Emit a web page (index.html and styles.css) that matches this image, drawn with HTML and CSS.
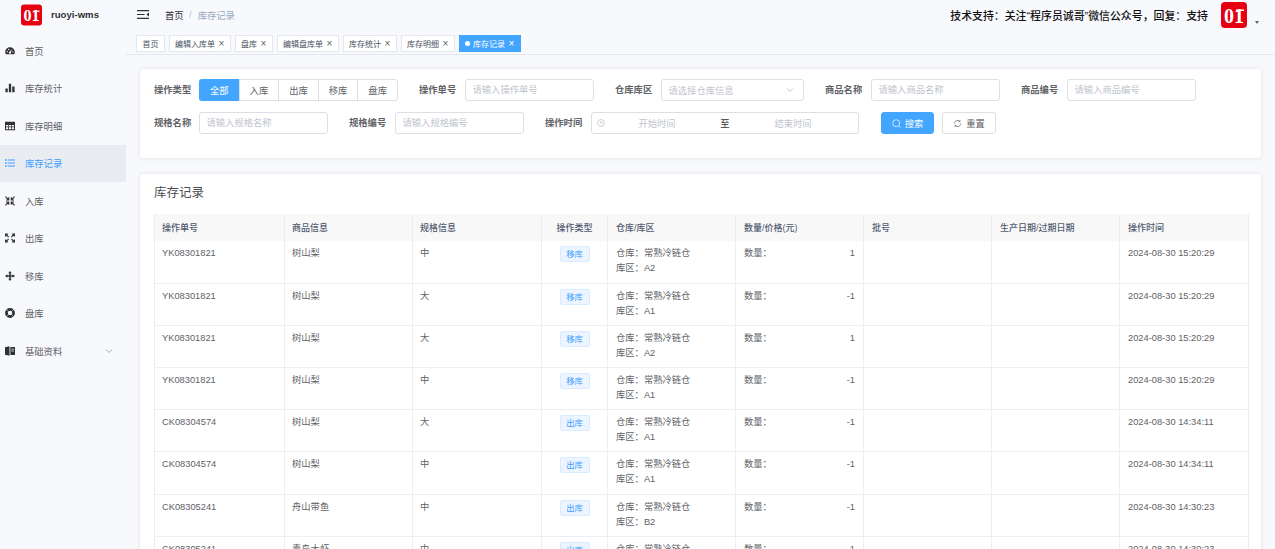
FILE: index.html
```html
<!DOCTYPE html>
<html lang="zh-CN">
<head>
<meta charset="utf-8">
<title>库存记录</title>
<link rel="stylesheet" href="styles.css">
</head>
<body>
<svg class="defs" width="0" height="0" aria-hidden="true">
  <symbol id="logo" viewBox="0 0 26 26">
    <rect width="26" height="26" rx="4" fill="#e60012"/>
    <text x="13" y="20.500" text-anchor="middle" font-family="Liberation Serif" font-weight="700" font-size="21" fill="#fff" textLength="20" lengthAdjust="spacingAndGlyphs">01</text>
    <rect x="15" y="7.500" width="8" height="1.500" fill="#fff"/>
  </symbol>
</svg>
<div class="app">
  <aside class="sidebar">
    <div class="brand">
      <svg class="brand-logo"><use href="#logo"/></svg>
      <span class="brand-name">ruoyi-wms</span>
    </div>
    <nav class="menu">
      <a class="menu-item"><svg class="mi" viewBox="0 0 12 12"><path d="M6 1.500a5.800 5.800 0 0 0-5.800 5.800c0 1.100.3 2 .8 2.700h10c.5-.7.8-1.600.8-2.700A5.800 5.800 0 0 0 6 1.500z" fill="#303133"/><circle cx="6" cy="8" r="1.300" fill="#fff"/><path d="M6 8l2-3.600" stroke="#fff" stroke-width="1"/><circle cx="2.800" cy="6.800" r=".8" fill="#fff"/><circle cx="4.500" cy="4.200" r=".8" fill="#fff"/><circle cx="9.400" cy="7" r=".8" fill="#fff"/></svg><span>首页</span></a>
      <a class="menu-item"><svg class="mi" viewBox="0 0 12 12"><path d="M.5 6.500h2.800V11H.5zM4.600 1h2.800v10H4.600zM8.700 4.200h2.800V11H8.700z" fill="#303133"/></svg><span>库存统计</span></a>
      <a class="menu-item"><svg class="mi" viewBox="0 0 12 12"><path fill-rule="evenodd" d="M0 1h12v10H0zM1.200 4.800v1.700h2.600V4.800zm3.500 0v1.700h2.600V4.800zm3.500 0v1.700h2.600V4.800zM1.200 7.400v2.400h2.600V7.400zm3.500 0v2.400h2.600V7.400zm3.500 0v2.400h2.600V7.400z" fill="#303133"/></svg><span>库存明细</span></a>
      <a class="menu-item active"><svg class="mi" viewBox="0 0 12 12"><path d="M0 1.500h2v1.800H0zM3.200 1.700H12v1.400H3.200zM0 5.100h2v1.800H0zM3.200 5.300H12v1.400H3.200zM0 8.700h2v1.800H0zM3.200 8.900H12v1.400H3.200z" fill="#409eff"/></svg><span>库存记录</span></a>
      <a class="menu-item"><svg class="mi" viewBox="0 0 12 12"><g stroke="#303133" stroke-width="1.300" fill="none"><path d="M.5 .8l4 4M4.500 1.500v3.300H1.200M11.500 .8l-4 4M7.500 1.500v3.300h3.300M.5 11.200l4-4M4.500 10.500V7.200H1.200M11.500 11.200l-4-4M7.500 10.500V7.200h3.300"/></g></svg><span>入库</span></a>
      <a class="menu-item"><svg class="mi" viewBox="0 0 12 12"><g stroke="#303133" stroke-width="1.400" fill="none"><path d="M.7 4.200V1.200h3M.9 1.400l3.400 3.400M11.300 4.200V1.200h-3M11.100 1.400L7.700 4.800M.7 7.800v3h3M.9 10.600l3.400-3.400M11.300 7.800v3h-3M11.100 10.600L7.700 7.200"/></g></svg><span>出库</span></a>
      <a class="menu-item"><svg class="mi" viewBox="0 0 12 12"><path d="M6 0l2.100 2.800H6.900v2.300h2.300V3.900L12 6 9.200 8.100V6.900H6.900v2.300h1.200L6 12 3.900 9.200h1.200V6.900H2.800v1.200L0 6l2.800-2.100v1.200h2.300V2.800H3.900z" fill="#303133"/></svg><span>移库</span></a>
      <a class="menu-item"><svg class="mi" viewBox="0 0 12 12"><circle cx="6" cy="6" r="4.300" fill="none" stroke="#303133" stroke-width="3.200"/><path d="M1.500 1.500l2.500 2.500M10.500 1.500L8 4M1.500 10.500L4 8M10.500 10.500L8 8" stroke="#f8f9fd" stroke-width=".7"/></svg><span>盘库</span></a>
      <a class="menu-item"><svg class="mi" viewBox="0 0 12 12"><path d="M0 1.500L5.400 .3v11.400L0 10.500z" fill="#303133"/><path d="M6.400 1.200H12v9.600H6.400z" fill="#303133"/><path d="M7.700 3.800h3M7.700 6h3" stroke="#f8f9fd" stroke-width=".9"/></svg><span>基础资料</span><svg class="menu-arrow" viewBox="0 0 8 8"><path d="M1 2.500l3 3 3-3" fill="none" stroke="#909399" stroke-width=".8"/></svg></a>
    </nav>
  </aside>
  <div class="main">
    <header class="head">
      <div class="navbar">
        <svg class="hamburger" viewBox="0 0 12 9"><path d="M0 0h12v1.200H0zM0 7.800h12V9H0zM0 3.900h7.500v1.200H0z" fill="#303133"/><path d="M12 2.600v3.800L9.300 4.500z" fill="#303133"/></svg>
        <div class="crumbs"><span class="crumb-home">首页</span><span class="crumb-sep">/</span><span class="crumb-now">库存记录</span></div>
        <div class="notice">技术支持：关注“程序员诚哥”微信公众号，回复：支持</div>
        <svg class="avatar"><use href="#logo"/></svg>
        <span class="caret"></span>
      </div>
      <div class="tabs">
        <span class="tab tab-home">首页</span>
        <span class="tab">编辑入库单<i class="x">×</i></span>
        <span class="tab">盘库<i class="x">×</i></span>
        <span class="tab">编辑盘库单<i class="x">×</i></span>
        <span class="tab">库存统计<i class="x">×</i></span>
        <span class="tab">库存明细<i class="x">×</i></span>
        <span class="tab tab-on"><b class="dot"></b>库存记录<i class="x">×</i></span>
      </div>
    </header>
    <section class="card filter">
      <div class="filter-row">
        <div class="field"><label>操作类型</label>
          <div class="radio"><span class="radio-on">全部</span><span>入库</span><span>出库</span><span>移库</span><span>盘库</span></div>
        </div>
        <div class="field"><label>操作单号</label><input class="input" placeholder="请输入操作单号"></div>
        <div class="field"><label>仓库库区</label>
          <div class="input select"><span>请选择仓库信息</span><svg viewBox="0 0 8 8"><path d="M1 2.500l3 3 3-3" fill="none" stroke="#b4b8bf" stroke-width=".8"/></svg></div>
        </div>
        <div class="field"><label>商品名称</label><input class="input" placeholder="请输入商品名称"></div>
        <div class="field"><label>商品编号</label><input class="input" placeholder="请输入商品编号"></div>
      </div>
      <div class="filter-row">
        <div class="field"><label>规格名称</label><input class="input" placeholder="请输入规格名称"></div>
        <div class="field"><label>规格编号</label><input class="input" placeholder="请输入规格编号"></div>
        <div class="field"><label>操作时间</label>
          <div class="input range">
            <svg viewBox="0 0 10 10"><circle cx="5" cy="5" r="4.300" fill="none" stroke="#b4b8bf" stroke-width=".8"/><path d="M5 2.500V5h2.200" fill="none" stroke="#b4b8bf" stroke-width=".8"/></svg>
            <span class="range-ph">开始时间</span><span class="range-to">至</span><span class="range-ph">结束时间</span>
          </div>
        </div>
        <div class="actions">
          <button class="btn btn-primary"><svg viewBox="0 0 10 10"><circle cx="4.700" cy="4.700" r="3.900" fill="none" stroke="#fff" stroke-width=".8"/><path d="M7.500 7.500l2 2" stroke="#fff" stroke-width=".8"/></svg>搜索</button>
          <button class="btn"><svg viewBox="0 0 10 10"><path d="M1.500 5a3.500 3.500 0 0 1 6-2.400M8.500 5a3.500 3.500 0 0 1-6 2.400" fill="none" stroke="#606266" stroke-width=".8"/><path d="M7.800 1v2H5.900M2.200 9V7h1.900" fill="none" stroke="#606266" stroke-width=".7"/></svg>重置</button>
        </div>
      </div>
    </section>
    <section class="card records">
      <h2 class="title">库存记录</h2>
      <table class="grid">
        <colgroup><col class="c1"><col class="c2"><col class="c3"><col class="c4"><col class="c5"><col class="c6"><col class="c7"><col class="c8"><col class="c9"></colgroup>
        <thead><tr><th>操作单号</th><th>商品信息</th><th>规格信息</th><th class="center">操作类型</th><th>仓库/库区</th><th>数量/价格(元)</th><th>批号</th><th>生产日期/过期日期</th><th>操作时间</th></tr></thead>
        <tbody>
          <tr><td>YK08301821</td><td>树山梨</td><td>中</td><td class="center"><span class="tag">移库</span></td><td><div>仓库：常熟冷链仓</div><div>库区：A2</div></td><td><div class="qty"><span>数量：</span><span>1</span></div></td><td></td><td></td><td>2024-08-30 15:20:29</td></tr>
          <tr><td>YK08301821</td><td>树山梨</td><td>大</td><td class="center"><span class="tag">移库</span></td><td><div>仓库：常熟冷链仓</div><div>库区：A1</div></td><td><div class="qty"><span>数量：</span><span>-1</span></div></td><td></td><td></td><td>2024-08-30 15:20:29</td></tr>
          <tr><td>YK08301821</td><td>树山梨</td><td>大</td><td class="center"><span class="tag">移库</span></td><td><div>仓库：常熟冷链仓</div><div>库区：A2</div></td><td><div class="qty"><span>数量：</span><span>1</span></div></td><td></td><td></td><td>2024-08-30 15:20:29</td></tr>
          <tr><td>YK08301821</td><td>树山梨</td><td>中</td><td class="center"><span class="tag">移库</span></td><td><div>仓库：常熟冷链仓</div><div>库区：A1</div></td><td><div class="qty"><span>数量：</span><span>-1</span></div></td><td></td><td></td><td>2024-08-30 15:20:29</td></tr>
          <tr><td>CK08304574</td><td>树山梨</td><td>大</td><td class="center"><span class="tag">出库</span></td><td><div>仓库：常熟冷链仓</div><div>库区：A1</div></td><td><div class="qty"><span>数量：</span><span>-1</span></div></td><td></td><td></td><td>2024-08-30 14:34:11</td></tr>
          <tr><td>CK08304574</td><td>树山梨</td><td>中</td><td class="center"><span class="tag">出库</span></td><td><div>仓库：常熟冷链仓</div><div>库区：A1</div></td><td><div class="qty"><span>数量：</span><span>-1</span></div></td><td></td><td></td><td>2024-08-30 14:34:11</td></tr>
          <tr><td>CK08305241</td><td>舟山带鱼</td><td>中</td><td class="center"><span class="tag">出库</span></td><td><div>仓库：常熟冷链仓</div><div>库区：B2</div></td><td><div class="qty"><span>数量：</span><span>-1</span></div></td><td></td><td></td><td>2024-08-30 14:30:23</td></tr>
          <tr><td>CK08305241</td><td>青岛大虾</td><td>中</td><td class="center"><span class="tag">出库</span></td><td><div>仓库：常熟冷链仓</div><div>库区：B2</div></td><td><div class="qty"><span>数量：</span><span>1</span></div></td><td></td><td></td><td>2024-08-30 14:30:23</td></tr>
        </tbody>
      </table>
    </section>
  </div>
</div>
</body>
</html>
```

FILE: styles.css
```css
* { box-sizing: border-box; }
html, body { margin: 0; height: 100%; overflow: hidden; }
body {
  font-family: "Liberation Sans", "Noto Sans CJK SC", sans-serif;
  font-size: 9.3px;
  color: #606266;
  background: #f8f9fd;
}
.defs { position: absolute; }
.app { display: flex; height: 549px; overflow: hidden; }

.sidebar { width: 126px; flex: none; background: #f8f9fd; }
.brand { height: 32px; display: flex; align-items: flex-start; padding-left: 21px; padding-top: 4px; }
.brand-logo { width: 21px; height: 22px; }
.brand-name { margin-left: 9px; margin-top: 5px; font-size: 9.6px; font-weight: 700; color: #303133; }
.menu { display: flex; flex-direction: column; }
.menu-item { height: 37.5px; display: flex; align-items: center; padding-left: 5px; color: #606266; }
.menu-item span { margin-left: 10px; }
.mi { width: 10px; height: 10px; flex: none; }
.menu-item.active { background: #e9ecf1; color: #409eff; }
.menu-arrow { width: 8px; height: 8px; margin-left: auto; margin-right: 13px; }

.main { flex: 1; min-width: 0; }
.head { height: 55px; border-bottom: 1px solid #e4e7ed; }
.navbar { height: 33px; display: flex; align-items: flex-start; position: relative; }
.hamburger { width: 12px; height: 9px; margin-left: 11px; margin-top: 10px; }
.crumbs { margin-left: 16px; margin-top: 8px; display: flex; align-items: center; }
.crumb-home { color: #303133; }
.crumb-sep { margin: 0 5.500px; color: #c0c4cc; }
.crumb-now { color: #97a8be; margin-left: .5px; }
.notice { margin-left: auto; margin-top: 7px; font-size: 10.900px; color: #111; font-weight: 500; }
.avatar { width: 26px; height: 26px; margin-left: 13px; margin-right: 28px; margin-top: 2px; }
.caret { position: absolute; right: 16px; top: 21px; border: 2.500px solid transparent; border-top: 3px solid #606266; }

.tabs { display: flex; gap: 4px; padding-left: 10px; padding-top: 2px; }
.tab {
  height: 17px; display: flex; align-items: center; padding: 0 5px;
  background: #fff; border: 1px solid #e4e7ed; font-size: 8px; color: #495060;
}
.tab-home { padding: 0 5.500px; }
.x { font-style: normal; font-size: 10px; width: 7px; text-align: center; margin-left: 3px; color: #606266; }
.tab-on { background: #42a5ff; border-color: #42a5ff; color: #fff; }
.tab-on .x { color: #fff; }
.dot { width: 5px; height: 5px; border-radius: 50%; background: #fff; margin-right: 3px; }

.card { background: #fff; margin-left: 14px; margin-right: 14px; border-radius: 3px; box-shadow: 0 0 4px rgba(0,0,0,.1); }
.filter { margin-top: 14px; height: 89px; padding: 10px 14px 0; }
.filter-row { display: flex; gap: 21px; height: 33px; }
.field { display: flex; align-items: flex-start; gap: 8px; }
.field label { height: 22px; line-height: 22px; font-weight: 700; color: #606266; white-space: nowrap; width: 38px; }
.field:first-child label { width: 37px; }
.input {
  width: 129px; height: 22px; border: 1px solid #dcdfe6; border-radius: 3px; background: #fff;
  padding: 0 6.500px; font: inherit; color: #606266; outline: none;
}
.input::placeholder { color: #c0c4cc; opacity: 1; }
.select { width: 143px; display: flex; align-items: center; justify-content: space-between; color: #c0c4cc; }
.select svg { width: 8px; height: 8px; margin-right: 3px; }
.range { width: 268px; display: flex; align-items: center; padding: 0 5px; }
.range svg { width: 8px; height: 8px; flex: none; }
.range-ph { width: 104px; flex: none; text-align: center; color: #c0c4cc; }
.range-to { width: 32px; flex: none; text-align: center; color: #303133; }
.radio { display: flex; height: 22px; width: 199px; border: 1px solid #dcdfe6; border-radius: 3px; background: #fff; }
.radio span { flex: 1; display: flex; align-items: center; justify-content: center; border-left: 1px solid #dcdfe6; }
.radio span:first-child { border-left: 0; }
.radio .radio-on { background: #42a5ff; color: #fff; margin: -1px 0 -1px -1px; padding-left: 1px; border-radius: 3px 0 0 3px; }
.actions { display: flex; gap: 8px; margin-left: 1px; }
.btn {
  height: 22px; width: 54px; padding: 0; display: flex; align-items: center; justify-content: center; gap: 4px;
  border: 1px solid #dcdfe6; border-radius: 3px; background: #fff; color: #606266; font: inherit;
}
.btn svg { width: 9px; height: 9px; }
.btn-primary { width: 53px; background: #42a5ff; border-color: #42a5ff; color: #fff; }

.records { margin-top: 16px; padding: 0 13px 0 14px; height: 400px; }
.title { margin: 0; padding-top: 11px; height: 40px; font-size: 12.500px; font-weight: 400; color: #4a4d52; line-height: 17px; }
.grid { width: 1094px; border-collapse: collapse; table-layout: fixed; }
.c1 { width: 130px; } .c2 { width: 128px; } .c3 { width: 129px; }
.c4 { width: 66px; } .c5, .c6, .c7, .c8 { width: 128px; } .c9 { width: 129px; }
.grid th {
  height: 27px; background: #f8f8f9; text-align: left; padding: 0 8px; font-weight: 500; color: #515a6e;
  font-size: 9px; border-right: 1px solid #ebeef5; white-space: nowrap;
}
.grid td {
  height: 42.200px; padding: 5px 8px 0; vertical-align: top; border-right: 1px solid #ebeef5; border-bottom: 1px solid #ebeef5;
  line-height: 15px; white-space: nowrap; color: #606266;
}
.grid tr > :nth-child(-n+3) { padding-left: 7px; }
.grid tr > :first-child { border-left: 1px solid #ebeef5; }
.grid .center { text-align: center; }
.tag {
  display: inline-block; width: 30px; height: 16px; line-height: 14px; text-align: center; background: #ecf5ff;
  border: 1px solid #d9ecff; border-radius: 2px; color: #409eff; font-size: 8.400px;
}
.qty { display: flex; justify-content: space-between; }
```
